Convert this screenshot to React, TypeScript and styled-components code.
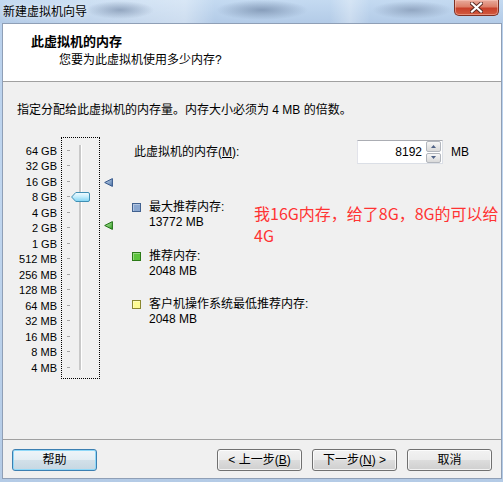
import React from 'react';
import styled, { createGlobalStyle } from 'styled-components';

const GlobalStyle = createGlobalStyle`
  html, body { margin: 0; padding: 0; }
  body {
    width: 503px;
    height: 482px;
    overflow: hidden;
    font-family: "Liberation Sans", "Noto Sans CJK SC", sans-serif;
    font-size: 12px;
    color: #000;
  }
`;

const UI_FONT = `"Liberation Sans", "Noto Sans CJK SC", sans-serif`;

const SCALE = [
  '64 GB', '32 GB', '16 GB', '8 GB', '4 GB', '2 GB', '1 GB',
  '512 MB', '256 MB', '128 MB', '64 MB', '32 MB', '16 MB', '8 MB', '4 MB',
];
const ROW_H = 15.5;
const MAX_MB = 65536;

// index on the scale (0 = top) for a memory size in MB
const scaleIndex = (mb: number) => Math.log2(MAX_MB / mb);

const Frame = styled.div`
  width: 503px;
  height: 482px;
  box-sizing: border-box;
  display: flex;
  flex-direction: column;
  background: linear-gradient(180deg, #b8d0ec 0%, #c0d6ef 40%, #b4cbe6 100%);
`;

const TitleBar = styled.div`
  height: 23px;
  flex: none;
  display: flex;
  align-items: flex-start;
  background-color: #bcd3ec;
  background-image:
    radial-gradient(ellipse 34px 9px at 120px 10px, rgba(128, 148, 176, 0.75), rgba(128, 148, 176, 0) 100%),
    radial-gradient(ellipse 46px 10px at 262px 10px, rgba(118, 140, 170, 0.75), rgba(118, 140, 170, 0) 100%),
    radial-gradient(ellipse 40px 9px at 412px 10px, rgba(128, 148, 176, 0.7), rgba(128, 148, 176, 0) 100%),
    linear-gradient(90deg, rgba(255,255,255,0) 0px, rgba(255,255,255,0.35) 185px, rgba(255,255,255,0) 215px,
      rgba(255,255,255,0) 330px, rgba(255,255,255,0.3) 350px, rgba(255,255,255,0) 370px),
    linear-gradient(180deg, #c4daf1 0%, #b3cbe7 100%);
`;

const TitleText = styled.span`
  padding-left: 3px;
  line-height: 21px;
  font-size: 12px;
  font-family: "Noto Sans CJK SC", sans-serif;
  color: #000;
  text-shadow: 0 0 6px rgba(255, 255, 255, 0.9);
`;

const CloseButton = styled.div`
  margin-left: auto;
  margin-right: 4px;
  width: 45px;
  height: 16px;
  box-sizing: border-box;
  border: 1px solid #7e3023;
  border-top: none;
  border-radius: 0 0 5px 5px;
  background: linear-gradient(180deg, #e8ab9c 0%, #dd7f69 45%, #c8402a 55%, #d25b3f 100%);
  box-shadow: inset 0 0 0 1px rgba(255, 210, 200, 0.45);
  display: flex;
  align-items: center;
  justify-content: center;
`;

const Client = styled.div`
  flex: 1;
  margin: 0 1px 3px 2px;
  border: 1px solid #8f9fb6;
  background: #f0f0f0;
  display: flex;
  flex-direction: column;
  min-height: 0;
`;

const Header = styled.div`
  flex: none;
  background: #fff;
  border-bottom: 1px solid #a0a0a0;
  padding-top: 9px;
  box-sizing: content-box;
  height: 48px;
`;

const HeaderTitle = styled.div`
  padding-left: 28px;
  font-weight: bold;
  font-size: 13px;
  line-height: 16px;
  font-family: "Noto Sans CJK SC", sans-serif;
`;

const HeaderSubtitle = styled.div`
  margin-top: 3px;
  padding-left: 56px;
  font-size: 12px;
  line-height: 16px;
`;

const Body = styled.div`
  flex: 1;
  position: relative;
  padding: 20px 14px 0 14px;
`;

const Description = styled.div`
  line-height: 16px;
`;

const Content = styled.div`
  margin-top: 19px;
  display: flex;
  align-items: flex-start;
`;

const ScaleLabels = styled.div`
  width: 40px;
  margin-right: 4px;
  padding-top: 6.5px;
  display: flex;
  flex-direction: column;
  font-size: 11px;
  text-align: right;
`;

const ScaleLabel = styled.div`
  height: ${ROW_H}px;
  line-height: ${ROW_H}px;
  white-space: nowrap;
`;

const SliderBox = styled.div`
  position: relative;
  width: 39px;
  height: 242px;
  box-sizing: border-box;
  border: 1px dotted #000;
  display: flex;
  align-items: flex-start;
`;

const Ticks = styled.div`
  margin-left: 5px;
  padding-top: 4.25px;
  display: flex;
  flex-direction: column;
`;

const TickRow = styled.div`
  height: ${ROW_H}px;
  display: flex;
  align-items: center;
`;

const Tick = styled.div`
  width: 3px;
  height: 1px;
  background: #a8a8a8;
`;

const Track = styled.div`
  margin-left: 9px;
  margin-top: 7px;
  width: 2px;
  height: 225px;
  background: #c9c9c9;
  border-right: 1px solid #fff;
`;

const ThumbWrap = styled.div`
  position: absolute;
  left: 9px;
  width: 19px;
  height: 10px;
  display: flex;
`;

const Markers = styled.div`
  position: relative;
  width: 10px;
  height: 242px;
  margin-left: 4px;
`;

const MarkerWrap = styled.div`
  position: absolute;
  left: 0;
  width: 9px;
  height: 9px;
  display: flex;
`;

const RightPanel = styled.div`
  margin-left: 18px;
  flex: 1;
  display: flex;
  flex-direction: column;
`;

const MemoryRow = styled.div`
  margin-top: 3px;
  height: 24px;
  display: flex;
  align-items: center;
`;

const MemoryLabel = styled.div`
  width: 225px;
  padding-left: 2px;
  box-sizing: border-box;
  line-height: 16px;
`;

const Mnemonic = styled.span`
  text-decoration: underline;
  text-underline-offset: 1px;
`;

const SpinBox = styled.div`
  width: 86px;
  height: 24px;
  box-sizing: border-box;
  border: 1px solid #dbdfe6;
  border-top-color: #abadb3;
  border-left-color: #e2e3ea;
  background: #fff;
  display: flex;
  align-items: center;
`;

const SpinValue = styled.div`
  flex: 1;
  text-align: right;
  padding-right: 4px;
  font-size: 12px;
`;

const SpinButtons = styled.div`
  width: 15px;
  height: 22px;
  margin-right: 1px;
  display: flex;
  flex-direction: column;
  gap: 1px;
`;

const SpinButton = styled.div`
  flex: 1;
  box-sizing: border-box;
  border: 1px solid #b2b6bd;
  border-radius: 2px;
  background: linear-gradient(180deg, #f7f7f7 0%, #e7e7e7 50%, #d9d9d9 100%);
  display: flex;
  align-items: center;
  justify-content: center;
`;

const Unit = styled.div`
  margin-left: 8px;
  font-size: 12px;
`;

const Legend = styled.div`
  margin-top: 36px;
  display: flex;
  flex-direction: column;
  gap: 18.5px;
`;

const LegendItem = styled.div`
  display: flex;
  align-items: flex-start;
`;

const Swatch = styled.div<{ $fill: string; $edge: string }>`
  width: 9px;
  height: 9px;
  margin-top: 3px;
  box-sizing: border-box;
  border: 1px solid ${(p) => p.$edge};
  background: ${(p) => p.$fill};
  box-shadow: inset 1px 1px 0 rgba(255, 255, 255, 0.35);
  flex: none;
`;

const LegendText = styled.div`
  margin-left: 8px;
  line-height: 15px;
`;

const Note = styled.div`
  position: absolute;
  left: 251px;
  top: 120px;
  color: #ff3333;
  font-family: "Noto Sans CJK SC", sans-serif;
  font-size: 16px;
  line-height: 22px;
`;

const Footer = styled.div`
  flex: none;
  border-top: 1px solid #a0a0a0;
  padding: 9px 9px 7px 9px;
  display: flex;
  align-items: center;
`;

const ButtonGroup = styled.div`
  margin-left: auto;
  display: flex;
  gap: 10px;
`;

const Button = styled.div<{ $focused?: boolean }>`
  width: 85px;
  height: 22px;
  box-sizing: border-box;
  border: 1px solid ${(p) => (p.$focused ? '#3c7fb1' : '#707070')};
  border-radius: 3px;
  background: ${(p) =>
    p.$focused
      ? 'linear-gradient(180deg, #eef5f9 0%, #e3edf3 50%, #d2e0e9 51%, #c6d7e2 100%)'
      : 'linear-gradient(180deg, #f2f2f2 0%, #ebebeb 50%, #dddddd 51%, #cfcfcf 100%)'};
  box-shadow: inset 0 0 0 1px ${(p) => (p.$focused ? '#8fd8f8' : 'rgba(255, 255, 255, 0.75)')};
  display: flex;
  align-items: center;
  justify-content: center;
  font-family: ${UI_FONT};
  font-size: 12px;
  line-height: 16px;
  color: #000;
`;

const Thumb = () => (
  <svg width="19" height="10" viewBox="0 0 19 10">
    <defs>
      <linearGradient id="thumbFill" x1="0" y1="0" x2="0" y2="1">
        <stop offset="0" stopColor="#f4fcff" />
        <stop offset="0.45" stopColor="#c7eefc" />
        <stop offset="1" stopColor="#7fd3f3" />
      </linearGradient>
    </defs>
    <path d="M0.6 5 L4.8 0.5 H17 Q18.5 0.5 18.5 2 V8 Q18.5 9.5 17 9.5 H4.8 Z" fill="url(#thumbFill)" stroke="#3f8fb4" />
  </svg>
);

const Marker = ({ id, light, dark, edge }: { id: string; light: string; dark: string; edge: string }) => (
  <svg width="9" height="9" viewBox="0 0 9 9">
    <defs>
      <linearGradient id={id} x1="0" y1="0" x2="1" y2="1">
        <stop offset="0" stopColor={light} />
        <stop offset="1" stopColor={dark} />
      </linearGradient>
    </defs>
    <path d="M0.7 4.5 L8.4 0.6 V8.4 Z" fill={`url(#${id})`} stroke={edge} strokeLinejoin="round" />
  </svg>
);

const Arrow = ({ up }: { up?: boolean }) => (
  <svg width="5" height="3" viewBox="0 0 5 3">
    <path d={up ? 'M0 3 L2.5 0 L5 3 Z' : 'M0 0 L2.5 3 L5 0 Z'} fill="#4f6286" />
  </svg>
);

const CloseGlyph = () => (
  <svg width="13" height="11" viewBox="0 0 13 11">
    <path d="M2 1.5 L11 9.5 M11 1.5 L2 9.5" stroke="#5a2a22" strokeWidth="4" strokeLinecap="square" />
    <path d="M2 1.5 L11 9.5 M11 1.5 L2 9.5" stroke="#fff" strokeWidth="2.2" strokeLinecap="square" />
  </svg>
);

// centre of a scale row, measured from the top padding edge of the slider box
const rowCenter = (idx: number) => 12 + idx * ROW_H;

export default function App() {
  const memory = 8192;
  const maxRecommended = 13772;
  const recommended = 2048;

  return (
    <>
      <GlobalStyle />
      <Frame>
        <TitleBar>
          <TitleText>新建虚拟机向导</TitleText>
          <CloseButton>
            <CloseGlyph />
          </CloseButton>
        </TitleBar>
        <Client>
          <Header>
            <HeaderTitle>此虚拟机的内存</HeaderTitle>
            <HeaderSubtitle>您要为此虚拟机使用多少内存?</HeaderSubtitle>
          </Header>
          <Body>
            <Description>指定分配给此虚拟机的内存量。内存大小必须为 4 MB 的倍数。</Description>
            <Content>
              <ScaleLabels>
                {SCALE.map((s) => (
                  <ScaleLabel key={s}>{s}</ScaleLabel>
                ))}
              </ScaleLabels>
              <SliderBox>
                <Ticks>
                  {SCALE.map((s) => (
                    <TickRow key={s}>
                      <Tick />
                    </TickRow>
                  ))}
                </Ticks>
                <Track />
                <ThumbWrap style={{ top: rowCenter(scaleIndex(memory)) - 5 }}>
                  <Thumb />
                </ThumbWrap>
              </SliderBox>
              <Markers>
                <MarkerWrap style={{ top: rowCenter(scaleIndex(maxRecommended)) - 4.5 - 1.5 }}>
                  <Marker id="mkBlue" light="#d3e2f4" dark="#4c74a8" edge="#34568a" />
                </MarkerWrap>
                <MarkerWrap style={{ top: rowCenter(scaleIndex(recommended)) - 4.5 - 1.5 }}>
                  <Marker id="mkGreen" light="#c8f5b4" dark="#2f9c22" edge="#1f6f14" />
                </MarkerWrap>
              </Markers>
              <RightPanel>
                <MemoryRow>
                  <MemoryLabel>
                    此虚拟机的内存(<Mnemonic>M</Mnemonic>):
                  </MemoryLabel>
                  <SpinBox>
                    <SpinValue>{memory}</SpinValue>
                    <SpinButtons>
                      <SpinButton>
                        <Arrow up />
                      </SpinButton>
                      <SpinButton>
                        <Arrow />
                      </SpinButton>
                    </SpinButtons>
                  </SpinBox>
                  <Unit>MB</Unit>
                </MemoryRow>
                <Legend>
                  <LegendItem>
                    <Swatch $fill="#8aa7d0" $edge="#41618f" />
                    <LegendText>
                      最大推荐内存:
                      <br />
                      {maxRecommended} MB
                    </LegendText>
                  </LegendItem>
                  <LegendItem>
                    <Swatch $fill="#5cc43c" $edge="#2b7a17" />
                    <LegendText>
                      推荐内存:
                      <br />
                      {recommended} MB
                    </LegendText>
                  </LegendItem>
                  <LegendItem>
                    <Swatch $fill="#fdfb92" $edge="#8a8730" />
                    <LegendText>
                      客户机操作系统最低推荐内存:
                      <br />
                      2048 MB
                    </LegendText>
                  </LegendItem>
                </Legend>
              </RightPanel>
            </Content>
            <Note>
              我16G内存，给了8G，8G的可以给
              <br />
              4G
            </Note>
          </Body>
          <Footer>
            <Button $focused>帮助</Button>
            <ButtonGroup>
              <Button>
                &lt; 上一步(<Mnemonic>B</Mnemonic>)
              </Button>
              <Button>
                下一步(<Mnemonic>N</Mnemonic>) &gt;
              </Button>
              <Button>取消</Button>
            </ButtonGroup>
          </Footer>
        </Client>
      </Frame>
    </>
  );
}
